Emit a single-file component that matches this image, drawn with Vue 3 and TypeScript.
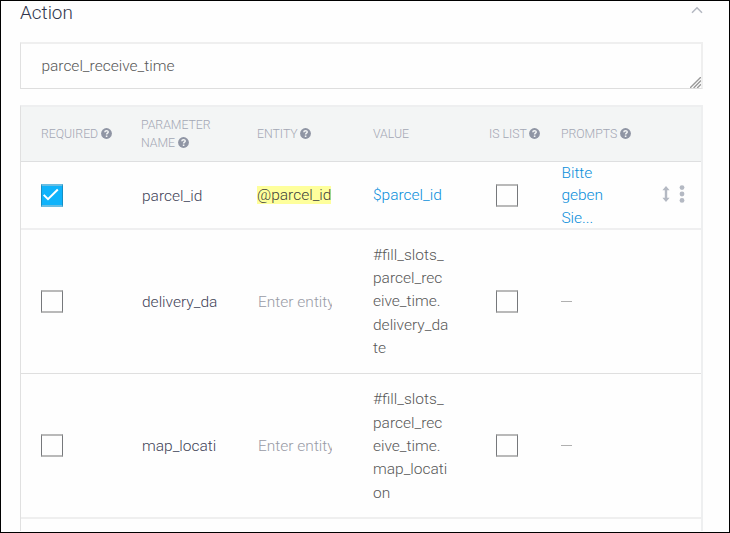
<script setup lang="ts">
interface Column {
  label: string
  help: boolean
}

interface Parameter {
  required: boolean
  name: string
  entity: string
  value: string[]
  linked: boolean
  isList: boolean
  prompts: string[]
}

const action = 'parcel_receive_time'

const columns: Column[] = [
  { label: 'REQUIRED', help: true },
  { label: 'PARAMETER NAME', help: true },
  { label: 'ENTITY', help: true },
  { label: 'VALUE', help: false },
  { label: 'IS LIST', help: true },
  { label: 'PROMPTS', help: true },
]

const parameters: Parameter[] = [
  {
    required: true,
    name: 'parcel_id',
    entity: '@parcel_id',
    value: ['$parcel_id'],
    linked: true,
    isList: false,
    prompts: ['Bitte', 'geben', 'Sie...'],
  },
  {
    required: false,
    name: 'delivery_da',
    entity: '',
    value: ['#fill_slots_', 'parcel_rec', 'eive_time.', 'delivery_da', 'te'],
    linked: false,
    isList: false,
    prompts: [],
  },
  {
    required: false,
    name: 'map_locati',
    entity: '',
    value: ['#fill_slots_', 'parcel_rec', 'eive_time.', 'map_locati', 'on'],
    linked: false,
    isList: false,
    prompts: [],
  },
]
</script>

<template>
  <main class="frame">
    <header class="head">
      <h1 class="title">Action</h1>
      <svg class="chevron" viewBox="0 0 12 8" width="12" height="8">
        <path d="M1 6.8 6 1.8 11 6.8" />
      </svg>
    </header>

    <div class="action-field">
      <span class="action-text">{{ action }}</span>
      <svg class="grip" viewBox="0 0 11 11" width="11" height="11">
        <path d="M0 11 11 0M3.6 11 11 3.6M7.2 11 11 7.2" />
      </svg>
    </div>

    <section class="table">
      <div class="row table-head">
        <div v-for="column in columns" :key="column.label" class="th">
          <span class="label">{{ column.label }}&nbsp;<svg v-if="column.help" class="help" viewBox="0 0 11 11" width="11" height="11">
            <circle cx="5.5" cy="5.5" r="5.4" />
            <path d="M3.8 4.2C3.9 2.1 7.3 2.2 7.2 4.1C7.1 5.2 5.6 5.2 5.6 6.5" />
            <rect x="4.8" y="7.5" width="1.6" height="1.5" />
          </svg></span>
        </div>
      </div>

      <div
        v-for="parameter in parameters"
        :key="parameter.name"
        class="row body-row"
        :class="{ compact: parameter.linked }"
      >
        <div>
          <span class="box" :class="{ checked: parameter.required }">
            <svg v-if="parameter.required" viewBox="0 0 20 20" width="20" height="20">
              <path d="M1.7 8.9 6 13.2 15.8 3.5" />
            </svg>
          </span>
        </div>
        <div class="name">{{ parameter.name }}</div>
        <div class="entity">
          <mark v-if="parameter.entity">{{ parameter.entity }}</mark>
          <div v-else class="placeholder">Enter entity</div>
        </div>
        <div class="value" :class="{ link: parameter.linked }">
          <div v-for="line in parameter.value" :key="line">{{ line }}</div>
        </div>
        <div class="list-cell"><span class="box" /></div>
        <div class="prompts">
          <template v-if="parameter.prompts.length">
            <div v-for="line in parameter.prompts" :key="line" class="link">{{ line }}</div>
          </template>
          <span v-else class="dash" />
        </div>
        <div class="tools">
          <template v-if="parameter.linked">
            <svg viewBox="0 0 8 16" width="8" height="16">
              <path d="M4 0 7.6 4.2H5.2V11.8H7.6L4 16 .4 11.8H2.8V4.2H.4Z" />
            </svg>
            <svg viewBox="0 0 6 18" width="6" height="18">
              <circle cx="3" cy="2.6" r="2.4" />
              <circle cx="3" cy="9" r="2.4" />
              <circle cx="3" cy="15.4" r="2.4" />
            </svg>
          </template>
        </div>
      </div>
    </section>
  </main>
</template>

<style>
body {
  margin: 0;
  background: #fff;
}
</style>

<style scoped>
.frame {
  box-sizing: border-box;
  width: 730px;
  height: 533px;
  padding: 0 26px 0 19px;
  border: 1px solid #000;
  overflow: hidden;
  background: #fefefe;
  color: #585858;
  font: 300 15.5px/23.4px Roboto, "Liberation Sans", sans-serif;
  display: flex;
  flex-direction: column;
}
.head {
  height: 41px;
  flex: none;
  display: flex;
  justify-content: space-between;
  align-items: flex-start;
}
.title {
  margin: 0;
  color: #2f354b;
  font-size: 18.9px;
  font-weight: 300;
  line-height: 24px;
}
.chevron {
  margin: 5px 0 0 0;
  fill: none;
  stroke: #b3b7c1;
  stroke-width: 1.5;
}
.action-field {
  box-sizing: border-box;
  height: 47px;
  flex: none;
  padding: 0 0 0 20px;
  display: flex;
  align-items: center;
  justify-content: space-between;
  border: solid #efefef;
  border-width: 2px 2px 1px 1px;
  border-left-color: #e0e0e0;
  border-bottom-color: #dedede;
}
.action-text {
  padding: 2px 0 0 0.4px;
}
.grip {
  align-self: flex-end;
  fill: none;
  stroke: #999;
  stroke-width: 1.4;
}
.table {
  height: 426px;
  flex: none;
  margin-top: 16px;
  box-sizing: border-box;
  display: flex;
  flex-direction: column;
  border: solid #eeeff0;
  border-width: 2px 2px 0 1px;
  border-left-color: #e0e0e0;
}
.row {
  display: grid;
  grid-template-columns: 100px 116px 116px 116px 72px 94px auto;
  padding-left: 20px;
  box-sizing: border-box;
  align-items: center;
  flex: none;
}
.table-head {
  height: 55px;
  background: #f3f5f5;
  border-bottom: 1px solid #dedfe0;
  color: #a3a7b4;
  font-size: 12.3px;
  line-height: 18px;
}
.label {
  display: block;
  max-width: 82px;
  letter-spacing: -0.03px;
}
.help {
  margin-left: -0.5px;
  vertical-align: -1px;
  fill: #8f95a4;
}
.help path {
  fill: none;
  stroke: #f3f5f5;
  stroke-width: 1.5;
}
.help rect {
  fill: #f3f5f5;
}
.body-row {
  height: 144px;
  border-bottom: 1px solid #dfdfdf;
}
.body-row.compact {
  height: 68px;
  border-bottom: 2px solid #efeff0;
}
.body-row:last-child {
  height: 145px;
  border-bottom: 2px solid #efefef;
}
.box {
  display: block;
  box-sizing: border-box;
  width: 22px;
  height: 23px;
  border: solid #76787b;
  border-width: 2px 1px;
  border-top-color: #b9b9b9;
  border-bottom-color: #b9b9b9;
}
.box.checked {
  background: #0fb3fb;
  border-color: #69bde2 #168fc5;
}
.box svg {
  display: block;
  fill: none;
  stroke: #fff;
  stroke-width: 2;
}
.name {
  padding: 2px 0 0 1px;
  color: #3f4358;
}
.entity mark {
  display: block;
  width: 74px;
  height: 18px;
  line-height: 18px;
  color: #3f3f3a;
  background: #feff9c;
}
.placeholder {
  width: 74px;
  padding: 2px 0 0 1px;
  overflow: hidden;
  white-space: nowrap;
  color: #999ba6;
}
.value {
  padding-top: 1.4px;
}
.body-row:last-child .value {
  padding-top: 2.4px;
}
.value.link {
  padding-top: 0;
}
.link {
  color: #0b8edb;
}
.list-cell {
  padding-left: 7px;
}
.prompts {
  padding-left: 0.4px;
  line-height: 22.3px;
}
.dash {
  display: block;
  width: 11px;
  height: 1px;
  background: #b0b0b0;
}
.tools {
  display: flex;
  align-items: center;
  gap: 9px;
  padding: 0 0 2px 6.5px;
  fill: #b4b9c3;
}
</style>
